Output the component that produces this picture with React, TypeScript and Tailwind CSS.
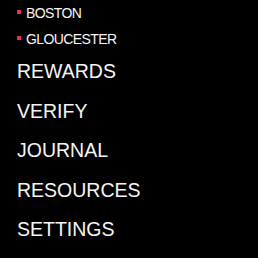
import React from 'react';

const locations = ['BOSTON', 'GLOUCESTER'];
const menuItems = ['REWARDS', 'VERIFY', 'JOURNAL', 'RESOURCES', 'SETTINGS'];

const App: React.FC = () => {
  return (
    <div className="w-[258px] h-[258px] bg-black text-[#f5f5f5] overflow-hidden pl-[17px] font-['Liberation_Sans',Arial,sans-serif]">
      {/* Location sub-list */}
      <ul>
        {locations.map((loc) => (
          <li key={loc} className="flex items-center text-[14px] leading-[26px] tracking-[-0.6px]">
            <span className="w-[4px] h-[4px] bg-[#e2334d] mr-[5px] mb-[2px]" />
            <span>{loc}</span>
          </li>
        ))}
      </ul>

      {/* Main menu */}
      <ul>
        {menuItems.map((item) => (
          <li key={item} className="text-[19.5px] leading-[39.5px]">
            {item}
          </li>
        ))}
      </ul>
    </div>
  );
};

export default App;
